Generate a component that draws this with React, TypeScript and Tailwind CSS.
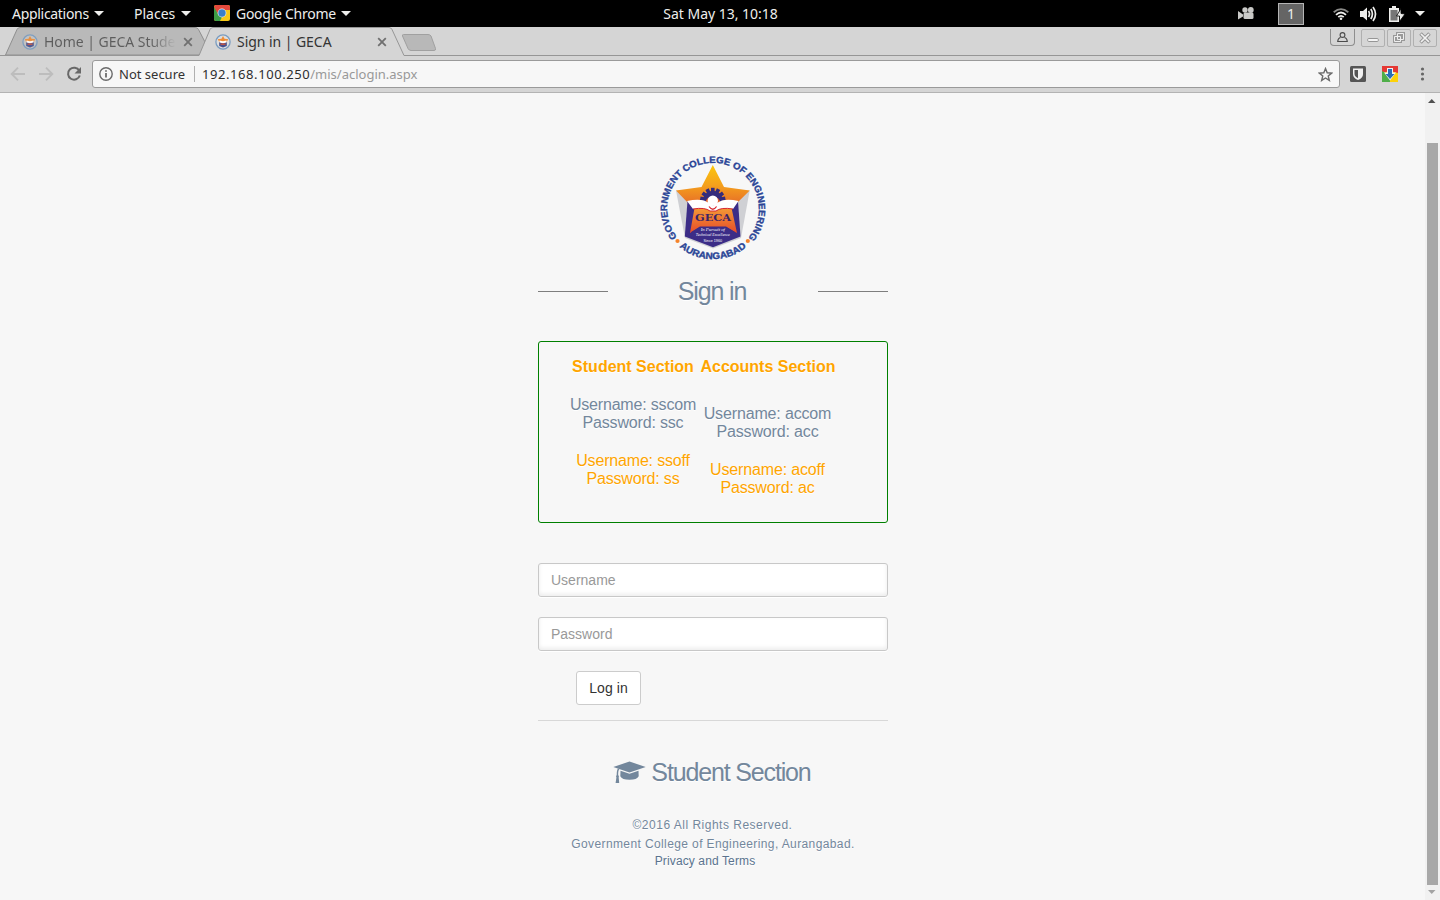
import React from "react";

const UI = "font-['Noto_Sans',sans-serif]";

function Caret({ className = "" }: { className?: string }) {
  return (
    <svg className={className} width="10" height="5" viewBox="0 0 10 5">
      <path d="M0 0h10L5 5z" fill="#eeeeec" />
    </svg>
  );
}

function ChromeIcon() {
  return (
    <svg width="16" height="16" viewBox="0 0 16 16">
      <defs>
        <clipPath id="cr"><rect width="16" height="16" rx="2" /></clipPath>
      </defs>
      <g clipPath="url(#cr)">
        <path d="M0 0h16v16H0z" fill="#f7c815" />
        <path d="M0 0h16v5H8L4 9 0 3z" fill="#e4493c" />
        <path d="M0 2l4.600 7.800L8 12l-2 4H0z" fill="#3d9c46" />
      </g>
      <circle cx="8" cy="8" r="4.400" fill="#e8eef5" />
      <circle cx="8" cy="8" r="3.700" fill="#3b7fc9" />
    </svg>
  );
}

function Favicon({ faded = false }: { faded?: boolean }) {
  return (
    <svg className="shrink-0" width="16" height="16" viewBox="0 0 16 16" opacity={faded ? 0.9 : 1}>
      <circle cx="8" cy="8" r="7.100" fill={faded ? "#c4c4c4" : "#dedede"} stroke="#7a9cc0" strokeWidth="1.300" />
      <path d="M8 2l1.500 2.800 3.800.5-1.900 3-.4 3H5l-.4-3-1.900-3 3.800-.5z" fill="#ee8d36" />
      <path d="M4.200 8h7.600v4L8 13.600 4.200 12z" fill="#46508f" />
      <path d="M4.500 6.500L8 7.300l3.500-.8v2L8 9.200l-3.500-.7z" fill="#fff" />
      <path d="M5.500 9.500h5v1.300h-5z" fill="#d95737" />
    </svg>
  );
}

function CloseX() {
  return (
    <svg width="10" height="10" viewBox="0 0 10 10">
      <path d="M1.200 1.200l7.600 7.600M8.800 1.200L1.200 8.800" stroke="#707070" strokeWidth="1.800" fill="none" />
    </svg>
  );
}

function TopBar() {
  return (
    <div className={`${UI} flex h-[27px] shrink-0 items-center bg-black text-[14px] leading-[27px] text-[#eeeeec]`}>
      <div className="flex flex-1 items-center pb-px pl-3">
        <span className="w-[82px] whitespace-nowrap tracking-[-0.300px]">Applications</span>
        <Caret />
        <span className="ml-[30px] w-[47px] whitespace-nowrap">Places</span>
        <Caret />
        <span className="ml-[23px] mr-[6px]"><ChromeIcon /></span>
        <span className="w-[105px] whitespace-nowrap tracking-[-0.27px]">Google Chrome</span>
        <Caret />
      </div>
      <span className="whitespace-nowrap pb-px pl-[4px] tracking-[-0.02px]">Sat May 13, 10:18</span>
      <div className="flex flex-1 items-center justify-end pr-[15px]">
        <svg width="16" height="13" viewBox="0 0 16 13" fill="#c9c9c7">
          <circle cx="7" cy="3" r="2.700" /><circle cx="12.800" cy="3" r="2.900" />
          <rect x="5.500" y="5.500" width="10" height="6.500" rx="1.500" />
          <path d="M0 4l5 3.500v2L0 12.500z" />
        </svg>
        <span className="ml-[24px] flex h-[22px] w-[26px] items-center justify-center border border-[#b5b5b5] bg-[#656565] text-[14px]">1</span>
        <svg className="ml-[29px]" width="16" height="12" viewBox="0 0 16 12" fill="none" strokeWidth="1.800">
          <path d="M.7 4.300Q8-2 15.300 4.300" stroke="#8a8a88" />
          <path d="M3 6.800Q8 2.200 13 6.800M5.300 9.200Q8 6.400 10.700 9.200" stroke="#eeeeec" />
          <circle cx="8" cy="10.700" r="1.300" fill="#eeeeec" stroke="none" />
        </svg>
        <svg className="ml-[11px]" width="17" height="16" viewBox="0 0 17 16" fill="none" stroke="#eeeeec" strokeWidth="1.700">
          <path d="M0 5h3l4-3.500v13L3 11H0z" fill="#eeeeec" stroke="none" />
          <path d="M8.500 5Q10.500 8 8.500 11M10.800 3Q14 8 10.800 13M13 1Q18 8 13 15" />
        </svg>
        <svg className="ml-[11px]" width="17" height="16" viewBox="0 0 17 16">
          <path d="M1 2h3V0h4v2h3v14H1z" fill="#eeeeec" />
          <path d="M2.500 4h7v10.500h-7z" fill="#777" />
          <path d="M13 2.500V7.500l4 .5L11.500 15.500V10H8.500z" fill="#eeeeec" stroke="#000" strokeWidth=".8" />
        </svg>
        <Caret className="ml-[10px]" />
      </div>
    </div>
  );
}

function WindowButton({ children }: { children: React.ReactNode }) {
  return (
    <span className="flex h-[18px] w-6 items-center justify-center rounded-[2px] border border-[#b0b0b0] bg-[#d6d6d6]">
      {children}
    </span>
  );
}

function TabStrip() {
  return (
    <div className={`${UI} relative flex h-[29px] shrink-0 items-start bg-[#d5d5d5] text-[14px] leading-[29px]`}>
      <svg className="absolute left-0 top-0" width="1440" height="29" viewBox="0 0 1440 29">
        <path d="M5.500 28L17 2.500Q18 .5 20 .5H195Q197.500.5 198.500 2.500L205.500 16 200 28z" fill="#b9b9b9" stroke="#8f8f8f" />
        <path d="M0 28.500H199L210 2.500Q211 .5 213 .5H389Q391 .5 392 2.500L404 28.500H1440V29H0z" fill="#d5d5d5" />
        <path d="M0 28.500H199L210 2.500Q211 .5 213 .5H389Q391 .5 392 2.500L404 28.500H1440" fill="none" stroke="#969696" />
        <path d="M403.500 7.500H428Q430 7.500 431 9L435.500 21.500Q436 23.500 434 23.500H411Q409 23.500 408 21.500L402.500 9Q402 7.500 403.500 7.500z" fill="#b8b8b8" stroke="#a0a0a0" />
      </svg>
      <div className="relative flex h-[29px] w-[193px] items-center pl-[22px]">
        <Favicon faded />
        <span className="ml-[6px] w-[133px] overflow-hidden whitespace-nowrap bg-linear-to-r from-[#5d5d5d] from-80% to-[#b9b9b9] bg-clip-text tracking-[-0.04px] text-transparent">Home | GECA Stude</span>
        <span className="ml-[7px]"><CloseX /></span>
      </div>
      <div className="relative flex h-[29px] flex-1 items-center pl-[22px]">
        <Favicon />
        <span className="ml-[6px] w-[140px] whitespace-nowrap tracking-[-0.05px] text-[#333]">Sign in | GECA</span>
        <CloseX />
      </div>
      <div className="relative flex items-start gap-[2px] pr-[3px] pt-[2px]">
        <span className="mr-[4px] flex h-[17px] w-[25px] items-center justify-center rounded-b-[4px] border border-t-0 border-[#8e8e8e]">
          <svg width="11" height="11" viewBox="0 0 11 11" fill="none" stroke="#4b4b4b" strokeWidth="1.100">
            <circle cx="5.500" cy="3" r="2.400" />
            <path d="M3.500 5.500Q1 6 .7 9.500h9.600Q10 6 7.500 5.500" />
          </svg>
        </span>
        <WindowButton>
          <svg width="12" height="12" viewBox="0 0 12 12"><rect x=".6" y="6.500" width="10.800" height="3" rx="1.200" fill="#f4f4f4" stroke="#969696" /></svg>
        </WindowButton>
        <WindowButton>
          <svg width="12" height="12" viewBox="0 0 12 12" fill="none">
            <path d="M4.500 1.500h6v6h-6zM1.500 4.500h6v5h-6z" stroke="#999" strokeWidth="3" />
            <path d="M4.500 1.500h6v6h-6zM1.500 4.500h6v5h-6z" stroke="#eee" strokeWidth="1" />
          </svg>
        </WindowButton>
        <WindowButton>
          <svg width="12" height="12" viewBox="0 0 12 12" fill="none">
            <path d="M1.500 1.500l9 9M10.500 1.500l-9 9" stroke="#969696" strokeWidth="3.600" />
            <path d="M2 2l8 8M10 2l-8 8" stroke="#f2f2f2" strokeWidth="1.700" />
          </svg>
        </WindowButton>
      </div>
    </div>
  );
}

function Toolbar() {
  return (
    <div className={`${UI} flex h-[37px] shrink-0 items-center border-b border-[#b3b3b3] bg-[#d5d5d5] text-[13px]`}>
      <svg className="ml-[10px]" width="16" height="16" viewBox="0 0 16 16" fill="none" stroke="#bdbdbd" strokeWidth="1.900">
        <path d="M15 8H2M8 1.700L1.700 8 8 14.300" />
      </svg>
      <svg className="ml-[12px]" width="16" height="16" viewBox="0 0 16 16" fill="none" stroke="#bdbdbd" strokeWidth="1.900">
        <path d="M1 8h13M8 1.700L14.300 8 8 14.300" />
      </svg>
      <svg className="ml-[12px]" width="16" height="16" viewBox="0 0 16 16">
        <path d="M13.300 4.700A6 6 0 1 0 13.800 9.500" fill="none" stroke="#686868" strokeWidth="2" />
        <path d="M15 1v6.500H8.500z" fill="#686868" />
      </svg>
      <div className="ml-[10px] flex h-[28px] w-[1248px] items-center rounded-[3px] border border-[#9a9a9a] bg-[#f7f7f7] pl-[6px] pr-[6px]">
        <svg width="14" height="14" viewBox="0 0 14 14">
          <circle cx="7" cy="7" r="6.200" fill="none" stroke="#6a6a6a" strokeWidth="1.400" />
          <path d="M6.200 6h1.600v4.500H6.200zM6.200 3.300h1.600v1.500H6.200z" fill="#5a5a5a" />
        </svg>
        <span className="ml-[6px] w-[75px] whitespace-nowrap pt-px text-[#333]">Not secure</span>
        <span className="h-4 w-px bg-[#b0b0b0]" />
        <span className="ml-[7px] flex-1 whitespace-nowrap pt-px text-[#999]"><span className="tracking-[0.57px] text-[#2d2d2d]">192.168.100.250</span><span>/mis/aclogin.aspx</span></span>
        <svg width="15" height="15" viewBox="0 0 16 16" fill="none" stroke="#6a6a6a" strokeWidth="1.500">
          <path d="M8 1.700l1.800 4.500 4.800.3-3.700 3.100 1.200 4.700L8 11.700l-4.100 2.600 1.200-4.700-3.700-3.100 4.800-.3z" />
        </svg>
      </div>
      <svg className="ml-[10px]" width="16" height="16" viewBox="0 0 16 16">
        <rect width="16" height="16" rx="1.500" fill="#555" />
        <path d="M3 2.500h10V8Q13 12 8 14 3 12 3 8z" fill="#f1f1f1" />
        <path d="M4.500 4H8v8.300Q4.500 10.500 4.500 8z" fill="#555" />
      </svg>
      <svg className="ml-[16px]" width="16" height="16" viewBox="0 0 16 16">
        <path d="M0 0h16v16H0z" fill="#fdd20a" />
        <path d="M0 0h16v7L8 5 0 7z" fill="#e53935" />
        <path d="M0 5l8 4v7H0z" fill="#4fae49" />
        <path d="M5 2h6v4.500h3L8 14.500 2 6.500h3z" fill="#f2f2f2" />
        <path d="M6 3h4v5h2.500L8 13 3.500 8H6z" fill="#2b6fb5" />
      </svg>
      <svg className="ml-[22px]" width="5" height="14" viewBox="0 0 5 14" fill="#666">
        <circle cx="2.500" cy="2" r="1.600" /><circle cx="2.500" cy="7" r="1.600" /><circle cx="2.500" cy="12" r="1.600" />
      </svg>
    </div>
  );
}

function Crest() {
  const teeth = [-80, -54, -27, 0, 27, 54, 80];
  return (
    <svg className="[text-shadow:none]" width="150" height="130" viewBox="0 0 150 130">
      <defs>
        <linearGradient id="star" x1="0" y1="25" x2="0" y2="64" gradientUnits="userSpaceOnUse">
          <stop offset="0" stopColor="#fbc60c" /><stop offset=".5" stopColor="#f5a21c" /><stop offset="1" stopColor="#e76e28" />
        </linearGradient>
        <linearGradient id="low" x1="0" y1="68" x2="0" y2="93" gradientUnits="userSpaceOnUse">
          <stop offset="0" stopColor="#f39a36" /><stop offset="1" stopColor="#e64b2a" />
        </linearGradient>
        <path id="topArc" d="M37 97A45.800 45.800 0 1 1 109 97" />
        <path id="botArc" d="M39.300 106.800A52 52 0 0 0 106.700 106.800" />
      </defs>
      <g fontFamily="'Liberation Sans', Arial, sans-serif" fontWeight="700" fill="#2a4596" stroke="#2a4596" strokeWidth=".35">
        <text fontSize="9.300" textLength="206" lengthAdjust="spacingAndGlyphs"><textPath href="#topArc">GOVERNMENT COLLEGE OF ENGINEERING</textPath></text>
        <text fontSize="9.300" textLength="73" lengthAdjust="spacingAndGlyphs"><textPath href="#botArc">AURANGABAD</textPath></text>
      </g>
      <circle cx="37.500" cy="101" r="2.100" fill="#f5832a" />
      <circle cx="107.800" cy="101" r="2.100" fill="#f5832a" />
      <path d="M36 50.500L45 98 73 108.500 101 98 109.700 50.500z" fill="#cfd0d4" />
      <path d="M72.800 25L84 47l25.700 3.500L96 64H49L36 50.500 61.500 47z" fill="url(#star)" />
      <path d="M47.500 61L44.800 96.500 73 107.300 100.500 96.500 98 61z" fill="#3c2d87" />
      <path d="M54.500 68L50 93 60 87H86L97 93 91.500 68z" fill="url(#low)" />
      <g fill="#342c7c">
        {teeth.map((a) => (
          <rect key={a} x="71" y="47.800" width="3.600" height="5" transform={`rotate(${a} 72.800 60.500)`} />
        ))}
        <circle cx="72.800" cy="60.500" r="9.800" />
      </g>
      <path d="M65 63a8 8 0 0 1 15.600 0z" fill="#e4612b" />
      <path d="M47 61Q62 57.500 69 63L73 66 77 63Q84 57.500 98.500 61L93 69Q81 67 76 71H70Q65 67 53 69z" fill="#fff" />
      <path d="M53 69Q65 67 70 71H76Q81 67 93 69" fill="none" stroke="#d72932" strokeWidth="1" />
      <circle cx="72.800" cy="60.800" r="5.200" fill="#fff" />
      <path d="M69 66.500Q72.800 72 76.600 66.500" fill="none" stroke="#d72932" strokeWidth="1.300" />
      <text x="55" y="80.800" fontFamily="'DejaVu Serif', serif" fontWeight="700" fontSize="8.800" textLength="36" lengthAdjust="spacingAndGlyphs" fill="#3a2366">GECA</text>
      <path d="M60 86.500H86L94 91.500 97 96 73 105 49 96 52 91.500z" fill="#3c2d87" />
      <g fontFamily="'Liberation Serif', serif" fill="#fff" textAnchor="middle">
        <text x="72.800" y="91" fontSize="4.800" fontStyle="italic">In Pursuit of</text>
        <text x="72.800" y="96.300" fontSize="4.800" fontStyle="italic" textLength="34" lengthAdjust="spacingAndGlyphs">Technical Excellence</text>
        <text x="72.800" y="101.700" fontSize="3.700" fontFamily="'Liberation Sans', sans-serif">Since 1960</text>
      </g>
    </svg>
  );
}

function Credentials({ lines, className }: { lines: string[]; className: string }) {
  return (
    <div className={className}>
      {lines.map((l) => <div key={l}>{l}</div>)}
    </div>
  );
}

function LoginPage() {
  return (
    <main className="flex flex-1 flex-col items-center bg-[#f7f7f7] pl-px font-['Liberation_Sans',Arial,sans-serif] text-[#73879c] [text-shadow:0_1px_0_#fff]">
      <div className="mt-[47px] flex h-[130px] w-[350px] justify-center pl-[4px]"><Crest /></div>
      <div className="mt-[6px] flex h-[30px] w-[350px] items-center justify-between">
        <span className="h-px w-[70px] bg-[#7e7e7e]" />
        <h1 className="pr-[2px] text-[25px] leading-[30px] tracking-[-1.150px]">Sign in</h1>
        <span className="h-px w-[70px] bg-[#7e7e7e]" />
      </div>
      <section className="mt-[35px] flex h-[182px] w-[350px] rounded-[3px] border border-[green] pl-[27px] pt-[16px] text-center text-[16px] leading-[18px]">
        <div className="w-[134px]">
          <h2 className="whitespace-nowrap font-bold text-[orange]">Student Section</h2>
          <Credentials className="mt-[20px] tracking-[-0.18px]" lines={["Username: sscom", "Password: ssc"]} />
          <Credentials className="mt-[20px] tracking-[-0.18px] text-[orange]" lines={["Username: ssoff", "Password: ss"]} />
        </div>
        <div className="w-[136px]">
          <h2 className="whitespace-nowrap font-bold text-[orange]">Accounts Section</h2>
          <Credentials className="mt-[29px] pr-px tracking-[-0.150px]" lines={["Username: accom", "Password: acc"]} />
          <Credentials className="mt-[20px] pr-px tracking-[-0.150px] text-[orange]" lines={["Username: acoff", "Password: ac"]} />
        </div>
      </section>
      <form className="mt-[40px] flex w-[350px] flex-col items-start border-b border-[#d8d8d8] pb-[15px] text-[14px]">
        <input className="mb-5 h-[34px] w-full rounded-[3px] border border-[#c8c8c8] bg-white px-3 shadow-[0_1px_0_#fff,inset_0_-2px_4px_rgba(0,0,0,0.08)] placeholder:text-[#999] placeholder:opacity-100" placeholder="Username" />
        <input className="mb-5 h-[34px] w-full rounded-[3px] border border-[#c8c8c8] bg-white px-3 shadow-[0_1px_0_#fff,inset_0_-2px_4px_rgba(0,0,0,0.08)] placeholder:text-[#999] placeholder:opacity-100" placeholder="Password" type="password" />
        <button type="button" className="ml-[38px] h-[34px] w-[65px] rounded-[3px] border border-[#ccc] bg-white tracking-[0.100px] text-[#333]">Log in</button>
      </form>
      <div className="mt-[36px] flex h-[30px] items-center pr-[2px]">
        <svg className="mr-[5px]" width="33" height="23" viewBox="0 0 33 23" fill="#73879c">
          <path d="M.3 6L16.500.5 32.700 6 16.500 11.500z" />
          <path d="M7.500 9.700l9 3.100 9-3.100.2 5.500Q24 18.700 16.500 18.700T7.300 15.200z" />
          <path d="M3 7l3.400 1Q5 9.500 5.200 14q1.200 1 .5 2.500L6.200 22H2.600l.8-5.500Q2.600 15 3.700 14 3.700 9 5 7.600z" />
        </svg>
        <h1 className="text-[25px] leading-[30px] tracking-[-1.150px]">Student Section</h1>
      </div>
      <footer className="mt-[29px] w-[350px] text-center text-[12px] leading-[18px]">
        <p className="pr-px tracking-[0.5px]">©2016 All Rights Reserved.</p>
        <p className="mt-px tracking-[0.390px]">Government College of Engineering, Aurangabad.</p>
        <p className="-mt-px pr-[16px] tracking-[0.120px] text-[#5a738e]">Privacy and Terms</p>
      </footer>
    </main>
  );
}

function Scrollbar() {
  return (
    <div className="flex w-[15px] flex-col items-center bg-[#f1f1f1] pr-px">
      <svg className="mt-[6px]" width="8" height="4" viewBox="0 0 8 4"><path d="M0 4h7.500L3.750 0z" fill="#505050" /></svg>
      <div className="mt-[40px] h-[742px] w-[11px] bg-[#a8a8a8]" />
      <svg className="mt-[5px]" width="8" height="4" viewBox="0 0 8 4"><path d="M0 0h7.500L3.750 4z" fill="#a3a3a3" /></svg>
    </div>
  );
}

export default function App() {
  return (
    <div className="flex h-[900px] w-[1440px] flex-col overflow-hidden">
      <TopBar />
      <TabStrip />
      <Toolbar />
      <div className="flex min-h-0 flex-1">
        <LoginPage />
        <Scrollbar />
      </div>
    </div>
  );
}
